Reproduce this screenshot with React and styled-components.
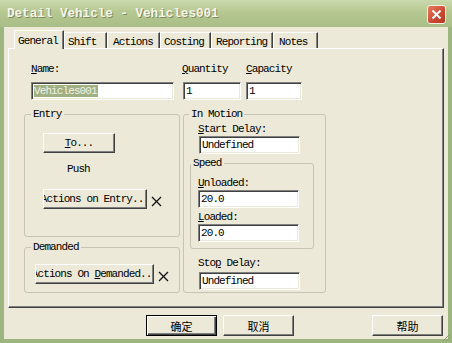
import React from "react";
import styled, { createGlobalStyle } from "styled-components";

const Global = createGlobalStyle`
  html, body { margin: 0; padding: 0; background: #ece9d8; }
  body { font-family: "Liberation Mono", monospace; }
`;

const Window = styled.div`
  position: relative;
  width: 452px;
  height: 343px;
  display: flex;
  flex-direction: column;
  background: #ece9d8;
  overflow: hidden;
`;

const TitleBar = styled.div`
  height: 27px;
  flex: none;
  display: flex;
  align-items: center;
  justify-content: space-between;
  padding: 0 6px 0 7px;
  background: linear-gradient(#cbd9ad, #b6c891 45%, #a9bd86);
`;

const Title = styled.span`
  font-family: "Liberation Mono", monospace;
  font-weight: bold;
  font-size: 12.6px;
  color: #f7f5e8;
  text-shadow: 1px 1px 0 #7d8c5c;
  margin-top: 1px;
`;

const CloseBtn = styled.div`
  width: 17px;
  height: 17px;
  margin-top: 1px;
  border: 1px solid #f4efe6;
  border-radius: 3px;
  background: linear-gradient(135deg, #e87d60, #c9482e 60%, #b43a22);
  display: flex;
  align-items: center;
  justify-content: center;
`;

const Frame = styled.div`
  flex: 1;
  display: flex;
  flex-direction: column;
  border: 4px solid #9db67f;
  border-top: none;
  padding: 0 4px 3px 4px;
`;

const TabStrip = styled.div`
  height: 21px;
  display: flex;
  align-items: flex-end;
  padding-left: 6px;
`;

const Tab = styled.div`
  position: relative;
  z-index: ${p => (p.$active ? 1 : 0)};
  width: ${p => p.$w}px;
  height: ${p => (p.$active ? 19 : 16)}px;
  margin-bottom: ${p => (p.$active ? -1 : 0)}px;
  box-sizing: border-box;
  background: #ece9d8;
  border-top: 1px solid #fff;
  border-left: 1px solid #fff;
  border-right: 1px solid #404040;
  box-shadow: inset -1px 0 0 #808080;
  font-size: 11px;
  letter-spacing: -0.9px;
  line-height: 14px;
  padding-left: ${p => p.$pl}px;
  padding-top: ${p => (p.$active ? 3 : 2)}px;
  color: #000;
  white-space: nowrap;
`;

const Panel = styled.div`
  height: 260px;
  box-sizing: border-box;
  border-top: 1px solid #fff;
  border-left: 1px solid #fff;
  border-right: 1px solid #404040;
  border-bottom: 1px solid #404040;
  box-shadow: inset -1px -1px 0 #808080;
  display: flex;
  flex-direction: column;
`;

const TopRow = styled.div`
  display: flex;
  margin-top: 14px;
  padding-left: 22px;
`;

const Field = styled.div`
  display: flex;
  flex-direction: column;
  width: ${p => p.$w}px;
  margin-right: ${p => p.$mr || 0}px;
`;

const Label = styled.div`
  font-size: 11px;
  letter-spacing: -0.9px;
  line-height: 12px;
  color: #000;
  margin-left: ${p => p.$ml || 0}px;
  margin-top: ${p => p.$mt || 0}px;
  white-space: nowrap;
`;

const TextBox = styled.div`
  width: ${p => p.$w}px;
  height: 18px;
  box-sizing: border-box;
  margin-top: ${p => p.$mt || 0}px;
  margin-left: ${p => p.$ml || 0}px;
  background: #fff;
  border: 1px solid;
  border-color: #808080 #fff #fff #808080;
  box-shadow: inset 1px 1px 0 #404040, inset -1px -1px 0 #ece9d8;
  padding: 1px 0 0 2px;
  font-size: 11px;
  letter-spacing: -0.9px;
  line-height: 14px;
  color: #000;
  white-space: nowrap;
  overflow: hidden;
`;

const Selected = styled.span`
  background: #9fb083;
  color: #f3f1e4;
  padding-right: 1px;
`;

const GroupsRow = styled.div`
  display: grid;
  grid-template-columns: 156px 143px;
  column-gap: 3px;
  margin-top: 8px;
  padding-left: 15px;
`;

const Column = styled.div`
  display: flex;
  flex-direction: column;
  gap: 4px;
`;

const GroupBox = styled.fieldset`
  margin: 0;
  padding: 0 ${p => p.$px || 0}px;
  min-width: 0;
  width: ${p => (p.$w ? `${p.$w}px` : "auto")};
  height: ${p => p.$h}px;
  box-sizing: border-box;
  border: 1px solid #c7c4b3;
  border-radius: 3px;
  display: flex;
  flex-direction: column;
  align-items: flex-start;
  margin-left: ${p => p.$ml || 0}px;
  margin-top: ${p => p.$mt || 0}px;
`;

const Legend = styled.legend`
  font-size: 11px;
  letter-spacing: -0.9px;
  line-height: 12px;
  padding: 0 2px;
  margin-left: ${p => p.$ml}px;
  color: #000;
`;

const Button = styled.div`
  width: ${p => p.$w}px;
  height: ${p => p.$h || 20}px;
  box-sizing: border-box;
  flex: none;
  margin-top: ${p => p.$mt || 0}px;
  background: #ece9d8;
  border: 1px solid;
  border-color: ${p => (p.$default ? "#000" : "#fff #404040 #404040 #fff")};
  box-shadow: ${p =>
    p.$default
      ? "inset 1px 1px 0 #fff, inset -1px -1px 0 #404040, inset -2px -2px 0 #808080"
      : "inset -1px -1px 0 #808080"};
  display: flex;
  align-items: center;
  justify-content: center;
  overflow: hidden;
  white-space: nowrap;
  font-family: ${p => (p.$cjk ? '"Noto Sans CJK SC", sans-serif' : '"Liberation Mono", monospace')};
  font-size: 11px;
  letter-spacing: ${p => (p.$cjk ? "0" : "-0.9px")};
  color: #000;
`;

const ButtonRow = styled.div`
  display: flex;
  align-items: center;
  margin-top: ${p => p.$mt || 0}px;
  gap: ${p => p.$gap || 0}px;
`;

const Push = styled.div`
  font-size: 11px;
  letter-spacing: -0.9px;
  line-height: 12px;
  margin: 10px 0 0 24px;
`;

const DialogButtons = styled.div`
  display: flex;
  margin-top: 7px;
  padding-left: 138px;
  padding-right: 1px;
  gap: 6px;
`;

const Spacer = styled.div`
  flex: 1;
`;

const Grip = styled.svg`
  position: absolute;
  right: 1px;
  bottom: 1px;
`;

const Cross = () => (
  <svg width="11" height="11" viewBox="0 0 11 11" style={{ marginTop: 4 }}>
    <path d="M1 1 L10 10 M10 1 L1 10" stroke="#111" strokeWidth="1.3" />
  </svg>
);

const tabs = [
  { name: "General", w: 50, pl: 3, active: true },
  { name: "Shift", w: 43, pl: 3 },
  { name: "Actions", w: 53, pl: 5 },
  { name: "Costing", w: 51, pl: 3 },
  { name: "Reporting", w: 62, pl: 4 },
  { name: "Notes", w: 45, pl: 5 },
];

export default function App() {
  return (
    <Window>
      <Global />
      <TitleBar>
        <Title>Detail Vehicle - Vehicles001</Title>
        <CloseBtn>
          <svg width="11" height="11" viewBox="0 0 11 11">
            <path d="M1.5 1.5 L9.5 9.5 M9.5 1.5 L1.5 9.5" stroke="#fff" strokeWidth="2" />
          </svg>
        </CloseBtn>
      </TitleBar>
      <Frame>
        <TabStrip>
          {tabs.map(t => (
            <Tab key={t.name} $w={t.w} $pl={t.pl} $active={t.active}>
              {t.name}
            </Tab>
          ))}
        </TabStrip>
        <Panel>
          <TopRow>
            <Field $w={143} $mr={9}>
              <Label><u>N</u>ame:</Label>
              <TextBox $w={143} $mt={7}>
                <Selected>Vehicles001</Selected>
              </TextBox>
            </Field>
            <Field $w={58} $mr={5}>
              <Label $ml={-1}><u>Q</u>uantity</Label>
              <TextBox $w={58} $mt={7}>1</TextBox>
            </Field>
            <Field $w={56}>
              <Label><u>C</u>apacity</Label>
              <TextBox $w={56} $mt={7}>1</TextBox>
            </Field>
          </TopRow>
          <GroupsRow>
            <Column>
              <GroupBox $h={129} $px={18}>
                <Legend $ml={-12}>Entry</Legend>
                <Button $w={72} $mt={13}>
                  <span><u>T</u>o...</span>
                </Button>
                <Push>Push</Push>
                <ButtonRow $mt={14} $gap={4}>
                  <Button $w={104}>Actions on Entry...</Button>
                  <Cross />
                </ButtonRow>
              </GroupBox>
              <GroupBox $h={52} $px={10}>
                <Legend $ml={-4}>Demanded</Legend>
                <ButtonRow $mt={11} $gap={4}>
                  <Button $w={119}>
                    <span>Actions On <u>D</u>emanded...</span>
                  </Button>
                  <Cross />
                </ButtonRow>
              </GroupBox>
            </Column>
            <GroupBox $h={185} $px={6}>
              <Legend $ml={-1}>In Motion</Legend>
              <Label $ml={8} $mt={3}><u>S</u>tart Delay:</Label>
              <TextBox $w={101} $ml={9} $mt={1}>Undefined</TextBox>
              <GroupBox $w={124} $h={92} $px={7} $mt={3}>
                <Legend $ml={-7}>Speed</Legend>
                <Label $mt={8}><u>U</u>nloaded:</Label>
                <TextBox $w={101} $mt={1}>20.0</TextBox>
                <Label $mt={3}><u>L</u>oaded:</Label>
                <TextBox $w={101} $mt={1}>20.0</TextBox>
              </GroupBox>
              <Label $ml={8} $mt={8}>Sto<u>p</u> Delay:</Label>
              <TextBox $w={101} $ml={9} $mt={3}>Undefined</TextBox>
            </GroupBox>
          </GroupsRow>
        </Panel>
        <DialogButtons>
          <Button $w={71} $h={21} $default $cjk>确定</Button>
          <Button $w={71} $h={21} $cjk>取消</Button>
          <Spacer />
          <Button $w={71} $h={21} $cjk>帮助</Button>
        </DialogButtons>
      </Frame>
      <Grip width="10" height="10" viewBox="0 0 10 10">
        <path d="M9 2 L2 9 M9 5 L5 9 M9 8 L8 9" stroke="#8a9a74" strokeWidth="1" />
      </Grip>
    </Window>
  );
}
